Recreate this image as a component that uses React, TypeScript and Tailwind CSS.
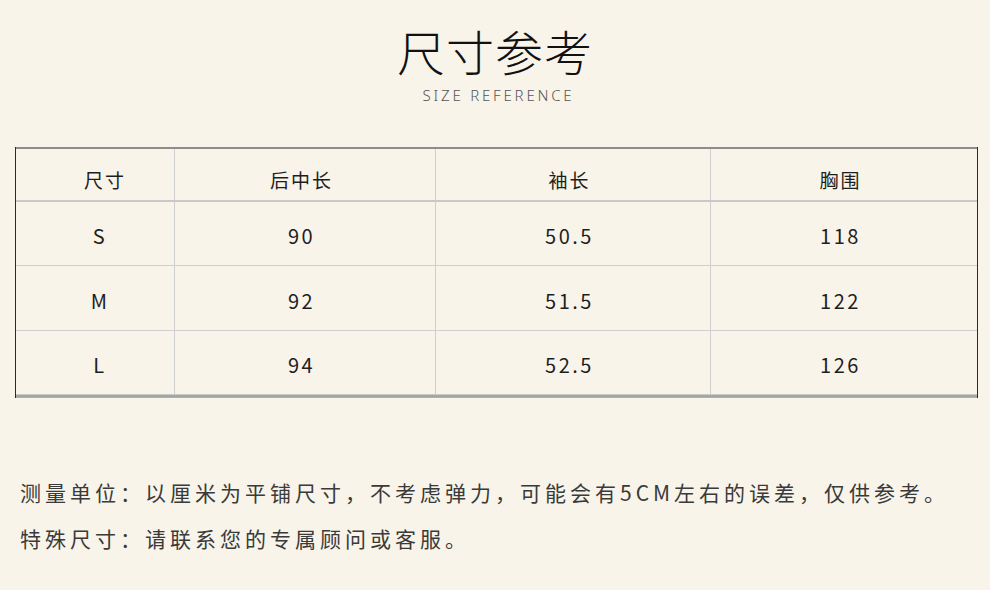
import React from "react";

const cjk = { fontFamily: '"Noto Sans CJK SC", "Noto Sans", sans-serif' };

const rows = [
  ["S", "90", "50.5", "118"],
  ["M", "92", "51.5", "122"],
  ["L", "94", "52.5", "126"],
];

function Row({ cells, h, bottom }: { cells: string[]; h: string; bottom?: boolean }) {
  return (
    <div className={`grid grid-cols-[158px_261px_275px_267px] ${h} ${bottom ? "border-b border-[#cfcfcf]" : ""}`}>
      {cells.map((c, i) => (
        <div
          key={i}
          className={`flex items-center justify-center pt-[5px] text-[20px] tracking-[2.5px] text-[#1e1e1e] ${i > 0 ? "border-l border-[#cfcfcf] pr-[7px]" : "pl-[10px]"}`}
          style={cjk}
        >
          {c}
        </div>
      ))}
    </div>
  );
}

export default function App() {
  return (
    <div className="w-[990px] h-[590px] bg-[#f8f4ea] flex flex-col overflow-hidden">
      <div className="flex flex-col items-center pt-[32px]">
        <div
          className="text-[48px] leading-[46px] tracking-[1px] font-light text-[#111]"
          style={{ fontFamily: '"Liberation Sans", "Noto Sans CJK SC", sans-serif' }}
        >
          尺寸参考
        </div>
        <div
          className="mt-[8px] pl-[7px] text-[15px] leading-[18px] tracking-[2.8px] text-[#555] font-light"
          style={{ fontFamily: '"Noto Sans", "Open Sans", sans-serif' }}
        >
          SIZE REFERENCE
        </div>
      </div>
      <div className="ml-[15px] mt-[43px] w-[963px] border-l border-r border-[#2a2a2a]">
        <div className="h-[2px] bg-[#8c8c8c]" />
        <div className="grid grid-cols-[158px_261px_275px_267px] h-[53px] border-b-2 border-[#c9c9c9]">
          {["尺寸", "后中长", "袖长", "胸围"].map((c, i) => (
            <div
              key={i}
              className={`flex items-center justify-center pt-[12px] text-[19px] tracking-[2px] text-[#1e1e1e] ${i > 0 ? "border-l border-[#cfcfcf] pr-[7px]" : "pl-[20px]"}`}
              style={cjk}
            >
              {c}
            </div>
          ))}
        </div>
        <Row cells={rows[0]} h="h-[64px]" bottom />
        <Row cells={rows[1]} h="h-[65px]" bottom />
        <Row cells={rows[2]} h="h-[63px]" />
        <div className="h-[4px] bg-gradient-to-b from-[#d6d6d2] via-[#9a9a98] to-[#b8b8b4]" />
      </div>
      <div
        className="ml-[20px] mt-[71px] text-[21px] leading-[46px] tracking-[4px] text-[#3a3a3a]"
        style={cjk}
      >
        <div>测量单位：以厘米为平铺尺寸，不考虑弹力，可能会有5CM左右的误差，仅供参考。</div>
        <div>特殊尺寸：请联系您的专属顾问或客服。</div>
      </div>
    </div>
  );
}
